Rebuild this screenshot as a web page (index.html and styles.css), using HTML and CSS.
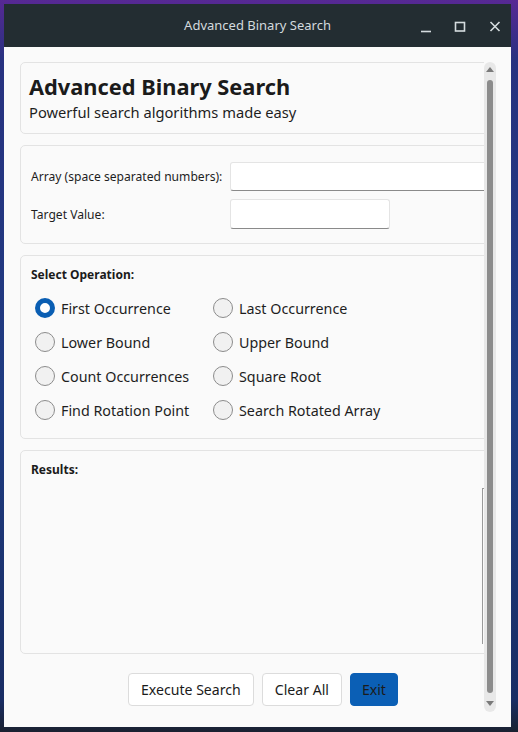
FILE: index.html
```html
<!DOCTYPE html>
<html>
<head>
<meta charset="utf-8">
<link rel="stylesheet" href="styles.css">
</head>
<body>
<div class="window">
  <div class="titlebar">
    <div></div>
    <div class="wtitle">Advanced Binary Search</div>
    <div class="wbtns">
      <span class="wbtn"><svg width="24" height="24" viewBox="0 0 24 24"><path d="M6 17.5h10" stroke="#d5dcdf" stroke-width="1.6" fill="none"/></svg></span>
      <span class="wbtn"><svg width="24" height="24" viewBox="0 0 24 24"><rect x="6.5" y="8.5" width="9" height="8.5" stroke="#d5dcdf" stroke-width="1.6" fill="none"/></svg></span>
      <span class="wbtn"><svg width="24" height="24" viewBox="0 0 24 24"><path d="M7.5 8l9 9M16.5 8l-9 9" stroke="#d5dcdf" stroke-width="1.6" fill="none"/></svg></span>
    </div>
  </div>
  <div class="client">
    <div class="main">
      <section class="card header">
        <h1 class="h-title">Advanced Binary Search</h1>
        <p class="h-sub">Powerful search algorithms made easy</p>
      </section>
      <section class="card inputs">
        <label class="lbl">Array (space separated numbers):</label>
        <div class="field wide"></div>
        <label class="lbl">Target Value:</label>
        <div class="field narrow"></div>
      </section>
      <section class="card ops">
        <div class="sect-title">Select Operation:</div>
        <div class="radios">
          <div class="radio"><span class="dot on"></span>First Occurrence</div>
          <div class="radio"><span class="dot"></span>Last Occurrence</div>
          <div class="radio"><span class="dot"></span>Lower Bound</div>
          <div class="radio"><span class="dot"></span>Upper Bound</div>
          <div class="radio"><span class="dot"></span>Count Occurrences</div>
          <div class="radio"><span class="dot"></span>Square Root</div>
          <div class="radio"><span class="dot"></span>Find Rotation Point</div>
          <div class="radio"><span class="dot"></span>Search Rotated Array</div>
        </div>
      </section>
      <section class="card results">
        <div class="sect-title">Results:</div>
        <div class="res-box"></div>
      </section>
      <div class="actions">
        <button class="btn">Execute Search</button>
        <button class="btn">Clear All</button>
        <button class="btn primary">Exit</button>
      </div>
    </div>
    <div class="vscroll">
      <span class="arrow up"></span>
      <span class="thumb"></span>
      <span class="arrow down"></span>
    </div>
  </div>
</div>
</body>
</html>
```

FILE: styles.css
```css
* { box-sizing: border-box; }
html, body { margin: 0; padding: 0; }
body {
  width: 518px;
  height: 732px;
  overflow: hidden;
  font-family: "Noto Sans", "DejaVu Sans", sans-serif;
  background:
    linear-gradient(180deg, rgba(90,40,150,0.95) 0px, rgba(40,50,130,0.9) 60px, rgba(30,60,130,0.95) 400px, rgba(25,45,100,1) 700px, #1a2130 732px),
    #22306a;
}
.window {
  margin: 4px 7px 0 4px;
  width: 507px;
  height: 723px;
  display: flex;
  flex-direction: column;
  background: #fafafa;
}
.titlebar {
  height: 43px;
  flex: none;
  background: #232d32;
  display: grid;
  grid-template-columns: 1fr auto 1fr;
  align-items: center;
}
.wtitle {
  color: #d3dade;
  font-size: 13px;
  padding-bottom: 1px;
}
.wbtns {
  display: flex;
  justify-content: flex-end;
  gap: 10px;
  padding-right: 4px;
}
.wbtn { width: 24px; height: 24px; display: block; }
.wbtn svg { display: block; }

.client {
  flex: 1;
  display: flex;
  min-height: 0;
}
.main {
  width: 480px;
  flex: none;
  overflow: hidden;
  padding: 15px 0 0 16px;
  display: flex;
  flex-direction: column;
  gap: 11px;
}
.card {
  width: 500px;
  flex: none;
  border: 1px solid #e3e3e3;
  border-radius: 5px;
  background: #fafafa;
}
.header {
  height: 72px;
  padding: 9px 8px 0;
}
.h-title {
  margin: 0;
  font-size: 21.8px;
  line-height: 29px;
  font-weight: 700;
  color: #1b1b1b;
}
.h-sub {
  margin: 0;
  font-size: 14.7px;
  line-height: 22px;
  color: #1e1e1e;
}
.inputs {
  height: 99px;
  padding: 16px 0 0 10px;
  display: grid;
  grid-template-columns: 199px auto;
  grid-template-rows: 29px 30px;
  row-gap: 8px;
  align-items: center;
  justify-items: start;
}
.lbl {
  font-size: 12.1px;
  color: #1e1e1e;
}
.field {
  height: 100%;
  background: #fff;
  border: 1px solid #e4e4e4;
  border-bottom-color: #8a8a8a;
  border-radius: 3px;
}
.wide { width: 300px; }
.narrow { width: 160px; }

.sect-title {
  font-size: 12px;
  font-weight: 700;
  color: #1b1b1b;
  line-height: 16px;
}
.ops {
  height: 184px;
  padding: 11px 0 0 10px;
}
.radios {
  margin-top: 8px;
  display: grid;
  grid-template-columns: 178px auto;
  grid-auto-rows: 34px;
  justify-content: start;
}
.radio {
  display: flex;
  align-items: center;
  gap: 6px;
  font-size: 14.3px;
  color: #1e1e1e;
  padding-left: 4px;
}
.dot {
  width: 20px;
  height: 20px;
  border-radius: 50%;
  border: 1px solid #8c8c8c;
  background: #f1f1f1;
  flex: none;
}
.dot.on {
  border: 5px solid #0a5eb3;
  background: #fff;
}
.results {
  height: 204px;
  padding: 11px 0 0 10px;
  display: flex;
  flex-direction: column;
}
.res-box {
  margin-top: 10px;
  margin-left: 451px;
  width: 30px;
  height: 156px;
  border-left: 1px solid #9a9a9a;
  border-top: 1px solid #9a9a9a;
}
.actions {
  display: flex;
  gap: 8px;
  padding-left: 108px;
  margin-top: 8px;
}
.btn {
  font-family: "Noto Sans", "DejaVu Sans", sans-serif;
  font-size: 14.1px;
  color: #1b1b1b;
  height: 33px;
  padding: 0 12px;
  background: #fff;
  border: 1px solid #dcdcdc;
  border-radius: 4px;
}
.btn.primary {
  background: #0b5fb5;
  border-color: #0b5fb5;
  padding: 0 11px;
}
.vscroll {
  width: 12px;
  height: 650px;
  margin-top: 15px;
  background: #e8e8e8;
  border-radius: 6px;
  display: flex;
  flex-direction: column;
  align-items: center;
}
.arrow {
  width: 0; height: 0;
  border-left: 4px solid transparent;
  border-right: 4px solid transparent;
}
.arrow.up { margin-top: 5px; border-bottom: 5px solid #7a7a7a; }
.arrow.down { margin-top: 8px; border-top: 5px solid #7a7a7a; }
.thumb {
  margin-top: 8px;
  width: 6px;
  height: 613px;
  border-radius: 3px;
  background: #8c8c8c;
}
```
